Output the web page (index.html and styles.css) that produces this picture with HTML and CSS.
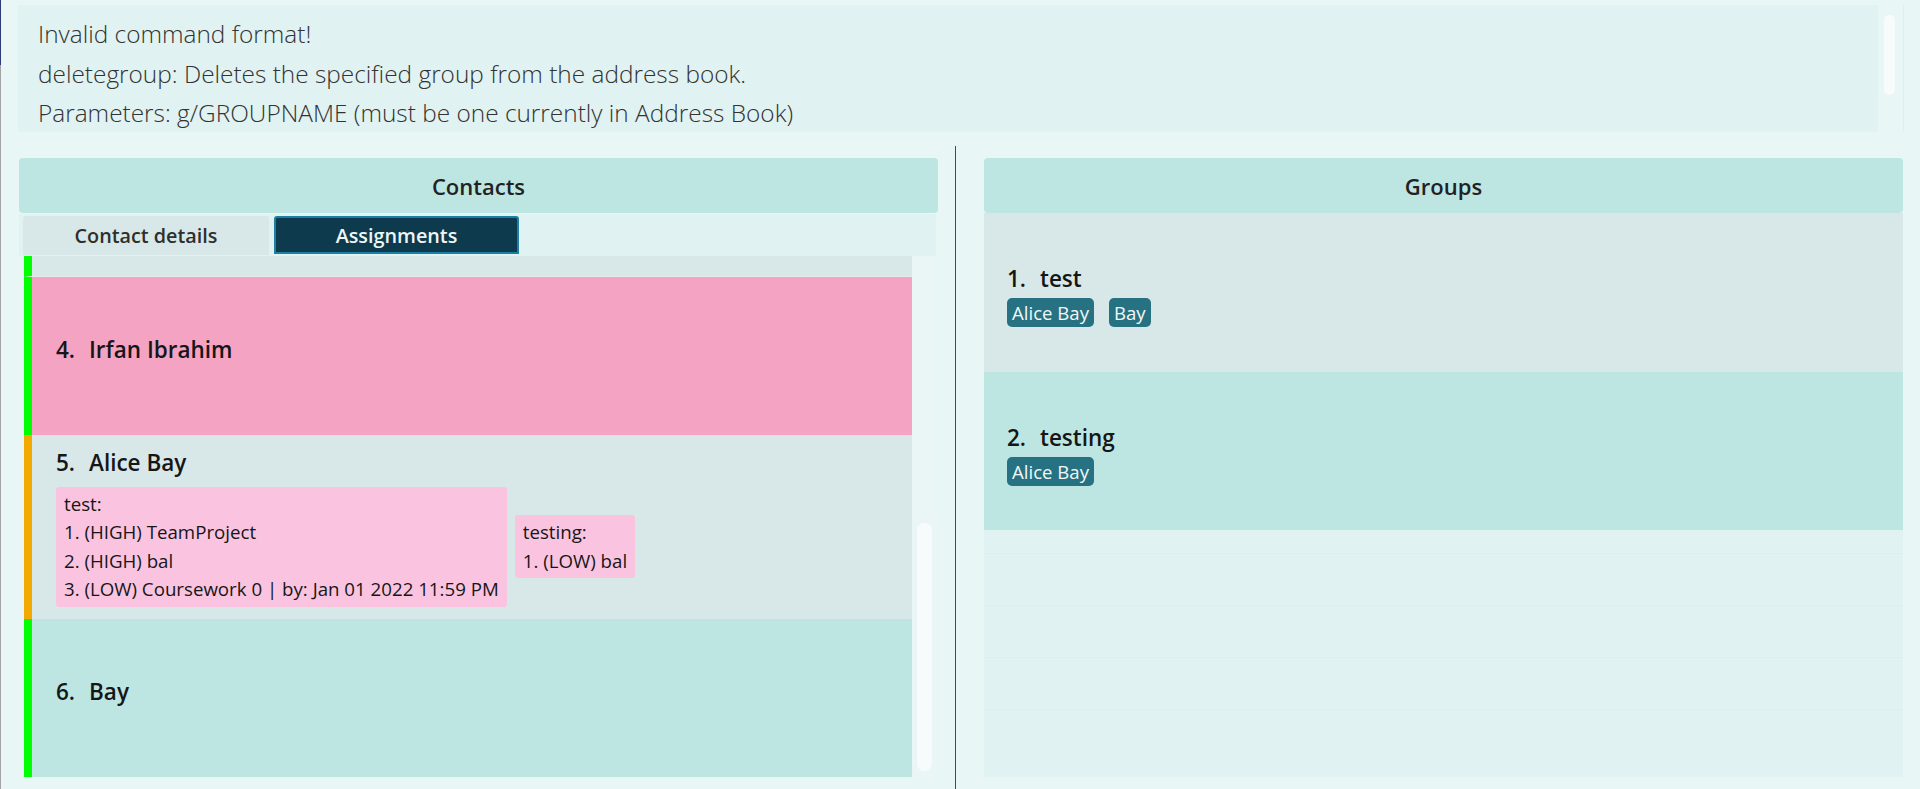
FILE: index.html
```html
<!DOCTYPE html>
<html>
<head>
<meta charset="utf-8">
<title>Address Book</title>
<link rel="stylesheet" href="styles.css">
</head>
<body>
<div class="window">
  <div class="result-row">
    <div class="result">
      <div class="result-line">Invalid command format!</div>
      <div class="result-line">deletegroup: Deletes the specified group from the address book.</div>
      <div class="result-line">Parameters: g/GROUPNAME (must be one currently in Address Book)</div>
    </div>
    <div class="result-scroll"><div class="result-thumb"></div></div>
  </div>
  <div class="main">
    <section class="panel panel-left">
      <div class="panel-header">Contacts</div>
      <div class="tabs">
        <div class="tab">Contact details</div>
        <div class="tab tab-active">Assignments</div>
      </div>
      <div class="list-wrap">
        <div class="list">
          <div class="card card-gray bar-green card-partial"></div>
          <div class="card card-pink bar-green card-single">
            <div class="name-row"><span class="num">4.</span><span class="name">Irfan Ibrahim</span></div>
          </div>
          <div class="card card-gray bar-orange card-tall">
            <div class="name-row"><span class="num">5.</span><span class="name">Alice Bay</span></div>
            <div class="assignments">
              <div class="assign-box">
                <div>test:</div>
                <div>1. (HIGH) TeamProject</div>
                <div>2. (HIGH) bal</div>
                <div>3. (LOW) Coursework 0 | by: Jan 01 2022 11:59 PM</div>
              </div>
              <div class="assign-box">
                <div>testing:</div>
                <div>1. (LOW) bal</div>
              </div>
            </div>
          </div>
          <div class="card card-teal bar-green card-single">
            <div class="name-row"><span class="num">6.</span><span class="name">Bay</span></div>
          </div>
        </div>
        <div class="list-scroll"><div class="list-thumb"></div></div>
      </div>
    </section>
    <div class="divider"></div>
    <section class="panel panel-right">
      <div class="panel-header">Groups</div>
      <div class="group-list">
        <div class="group-card card-gray">
          <div class="name-row"><span class="num">1.</span><span class="name">test</span></div>
          <div class="tags"><span class="tag">Alice Bay</span><span class="tag">Bay</span></div>
        </div>
        <div class="group-card card-teal">
          <div class="name-row"><span class="num">2.</span><span class="name">testing</span></div>
          <div class="tags"><span class="tag">Alice Bay</span></div>
        </div>
        <div class="group-empty"></div>
      </div>
    </section>
  </div>
</div>
</body>
</html>
```

FILE: styles.css
```css
* { box-sizing: border-box; }
html, body { margin: 0; padding: 0; }
body {
  width: 1920px;
  height: 789px;
  overflow: hidden;
  background: #e9f6f6;
  font-family: "Open Sans", "Noto Sans", sans-serif;
  color: #1b1b1b;
}
.window {
  position: relative;
  height: 789px;
  display: flex;
  flex-direction: column;
  border-left: 1px solid #a3a3a3;
}
.window::before {
  content: "";
  position: absolute;
  left: -1px;
  top: 0;
  width: 1px;
  height: 65px;
  background: #2b3a78;
}
.result-row {
  display: flex;
  margin: 5px 0 0 17px;
  height: 127px;
}
.result {
  width: 1860px;
  background: #e0f2f1;
  padding: 9px 0 0 20px;
  font-weight: 300;
  font-size: 24.4px;
  line-height: 39.5px;
  color: #333333;
  white-space: nowrap;
}
.result-scroll {
  width: 26px;
  padding: 10px 0 0 6px;
  border-right: 1px solid #dfefef;
}
.result-thumb {
  width: 11px;
  height: 80px;
  border-radius: 5px;
  background: #f7fbfb;
}
.main {
  flex: 1;
  display: flex;
  margin-top: 14px;
  padding-left: 18px;
}
.panel {
  width: 919px;
  padding-top: 12px;
  display: flex;
  flex-direction: column;
}
.panel-header {
  height: 55px;
  background: #bde6e3;
  border-radius: 4px;
  display: flex;
  align-items: center;
  justify-content: center;
  font-size: 22px;
  font-weight: 600;
  color: #222222;
}
.tabs {
  margin-top: 1px;
  width: 917px;
  height: 42px;
  background: #e0f2f1;
  display: flex;
  gap: 5px;
  padding: 2px 0 0 4px;
}
.tab {
  width: 246px;
  height: 39px;
  background: #d8e8e8;
  border-radius: 3px 3px 0 0;
  display: flex;
  align-items: center;
  justify-content: center;
  font-size: 19.8px;
  font-weight: 600;
  color: #2f2f2f;
}
.tab-active {
  width: 245px;
  height: 38px;
  background: #0e3a4e;
  border: 2px solid #1c7fa6;
  color: #eef6f6;
}
.list-wrap {
  display: flex;
  height: 521px;
  padding-left: 5px;
}
.list {
  width: 888px;
  display: flex;
  flex-direction: column;
}
.card {
  min-height: 158px;
  display: flex;
  flex-direction: column;
  justify-content: center;
  padding: 13px 0 13px 24px;
  border-left: 8px solid #00ff00;
}
.card-single { padding-bottom: 25px; }
.card-partial {
  min-height: 21px;
  height: 21px;
  padding: 0;
  border-bottom: 1px solid #e2eeee;
}
.card-tall { min-height: 184px; }
.card-gray { background: #d8e8e8; }
.card-pink { background: #f4a3c3; }
.card-teal { background: #bde6e3; }
.bar-green { border-left-color: #00ff00; }
.bar-orange { border-left-color: #f2a900; }
.name-row {
  display: flex;
  gap: 12px;
  font-size: 22.5px;
  font-weight: 600;
  line-height: 30px;
  color: #161616;
}
.num { min-width: 21px; }
.assignments {
  display: flex;
  align-items: center;
  gap: 8px;
  margin-top: 9px;
}
.assign-box {
  background: #fac4e0;
  border-radius: 3px;
  padding: 3px 8px;
  font-size: 18.7px;
  font-weight: 500;
  line-height: 28.5px;
  color: #161616;
  white-space: nowrap;
}
.list-scroll {
  width: 24px;
  background: #eaf6f6;
  padding: 267px 0 0 5px;
}
.list-thumb {
  width: 15px;
  height: 248px;
  border-radius: 7px;
  background: #f7fbfb;
}
.divider {
  width: 1px;
  margin-left: 17px;
  margin-right: 28px;
  background: #4a4a4a;
}
.group-list {
  height: 564px;
  display: flex;
  flex-direction: column;
}
.group-card {
  min-height: 158px;
  display: flex;
  flex-direction: column;
  justify-content: center;
  padding: 6px 0 0 23px;
}
.group-card:first-child { min-height: 159px; }
.tags {
  display: flex;
  gap: 15px;
  margin-top: 4px;
}
.tag {
  background: #277282;
  color: #f2f8f8;
  border-radius: 5px;
  padding: 0 5px;
  height: 29px;
  font-size: 18.6px;
  line-height: 29px;
}
.group-empty {
  flex: 1;
  background-color: #e0f2f1;
  background-image: repeating-linear-gradient(to bottom, transparent 0, transparent 51px, rgba(205, 228, 228, 0.22) 51px, rgba(205, 228, 228, 0.22) 52px);
  background-position: 0 -28px;
}
```
